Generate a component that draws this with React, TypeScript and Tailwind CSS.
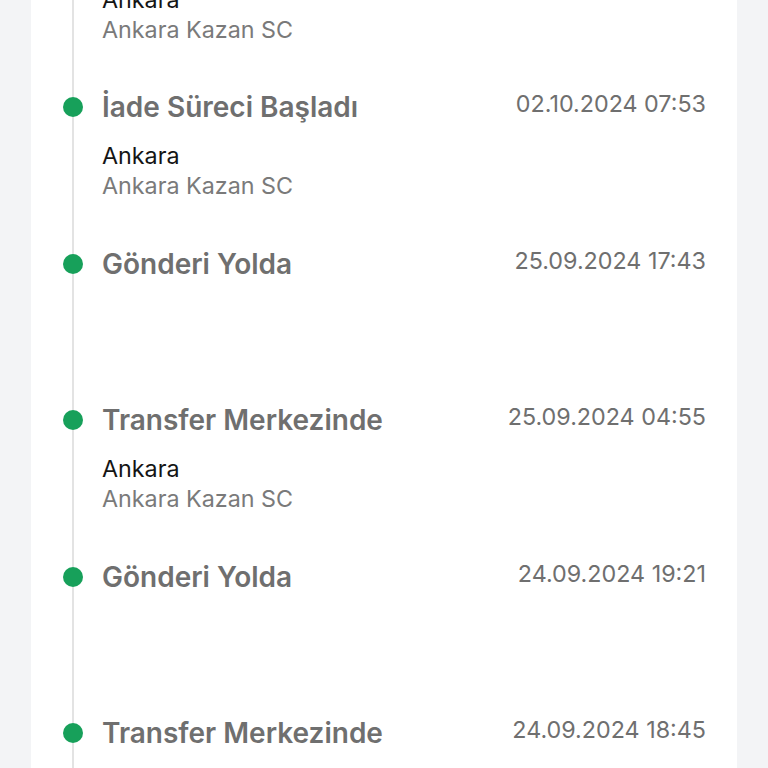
const events = [
  { title: "Transfer Merkezinde", date: "25.09.2024 04:55", city: "Ankara", branch: "Ankara Kazan SC" },
  { title: "İade Süreci Başladı", date: "02.10.2024 07:53", city: "Ankara", branch: "Ankara Kazan SC" },
  { title: "Gönderi Yolda", date: "25.09.2024 17:43" },
  { title: "Transfer Merkezinde", date: "25.09.2024 04:55", city: "Ankara", branch: "Ankara Kazan SC" },
  { title: "Gönderi Yolda", date: "24.09.2024 19:21" },
  { title: "Transfer Merkezinde", date: "24.09.2024 18:45", city: "Ankara", branch: "Ankara Kazan SC" },
];

type TrackingEvent = {
  title: string;
  date: string;
  city?: string;
  branch?: string;
};

function TimelineItem({ event }: { event: TrackingEvent }) {
  return (
    <div className="flex h-[156.5px]">
      <div className="flex w-5 flex-col items-center">
        <div className="h-[6px] w-[2px] bg-[#e3e3e3]" />
        <div className="h-5 w-5 shrink-0 rounded-full bg-[#17a05a]" />
        <div className="w-[2px] flex-1 bg-[#e3e3e3]" />
      </div>
      <div className="ml-[19px] flex min-w-0 flex-1 flex-col">
        <div className="flex items-start justify-between">
          <h3 className="text-[28px] leading-[32px] font-semibold text-[#6f6f6f]">
            {event.title}
          </h3>
          <span className="text-[23.3px] leading-[26px] text-[#6f6f6f]">{event.date}</span>
        </div>
        {event.city && (
          <div className="mt-[18px] text-[23.3px] leading-[30px]">
            <p className="text-[#151515]">{event.city}</p>
            <p className="text-[#7a7a7a]">{event.branch}</p>
          </div>
        )}
      </div>
    </div>
  );
}

export default function App() {
  return (
    <div
      className="h-[768px] overflow-hidden bg-[#f3f4f6] px-[31px] [font-family:Inter,'Noto_Sans',sans-serif]"
    >
      <div className="h-full overflow-hidden bg-white pl-8 pr-[31px]">
        <div className="-mt-[65.5px]">
          {events.map((event, i) => (
            <TimelineItem key={i} event={event} />
          ))}
        </div>
      </div>
    </div>
  );
}
